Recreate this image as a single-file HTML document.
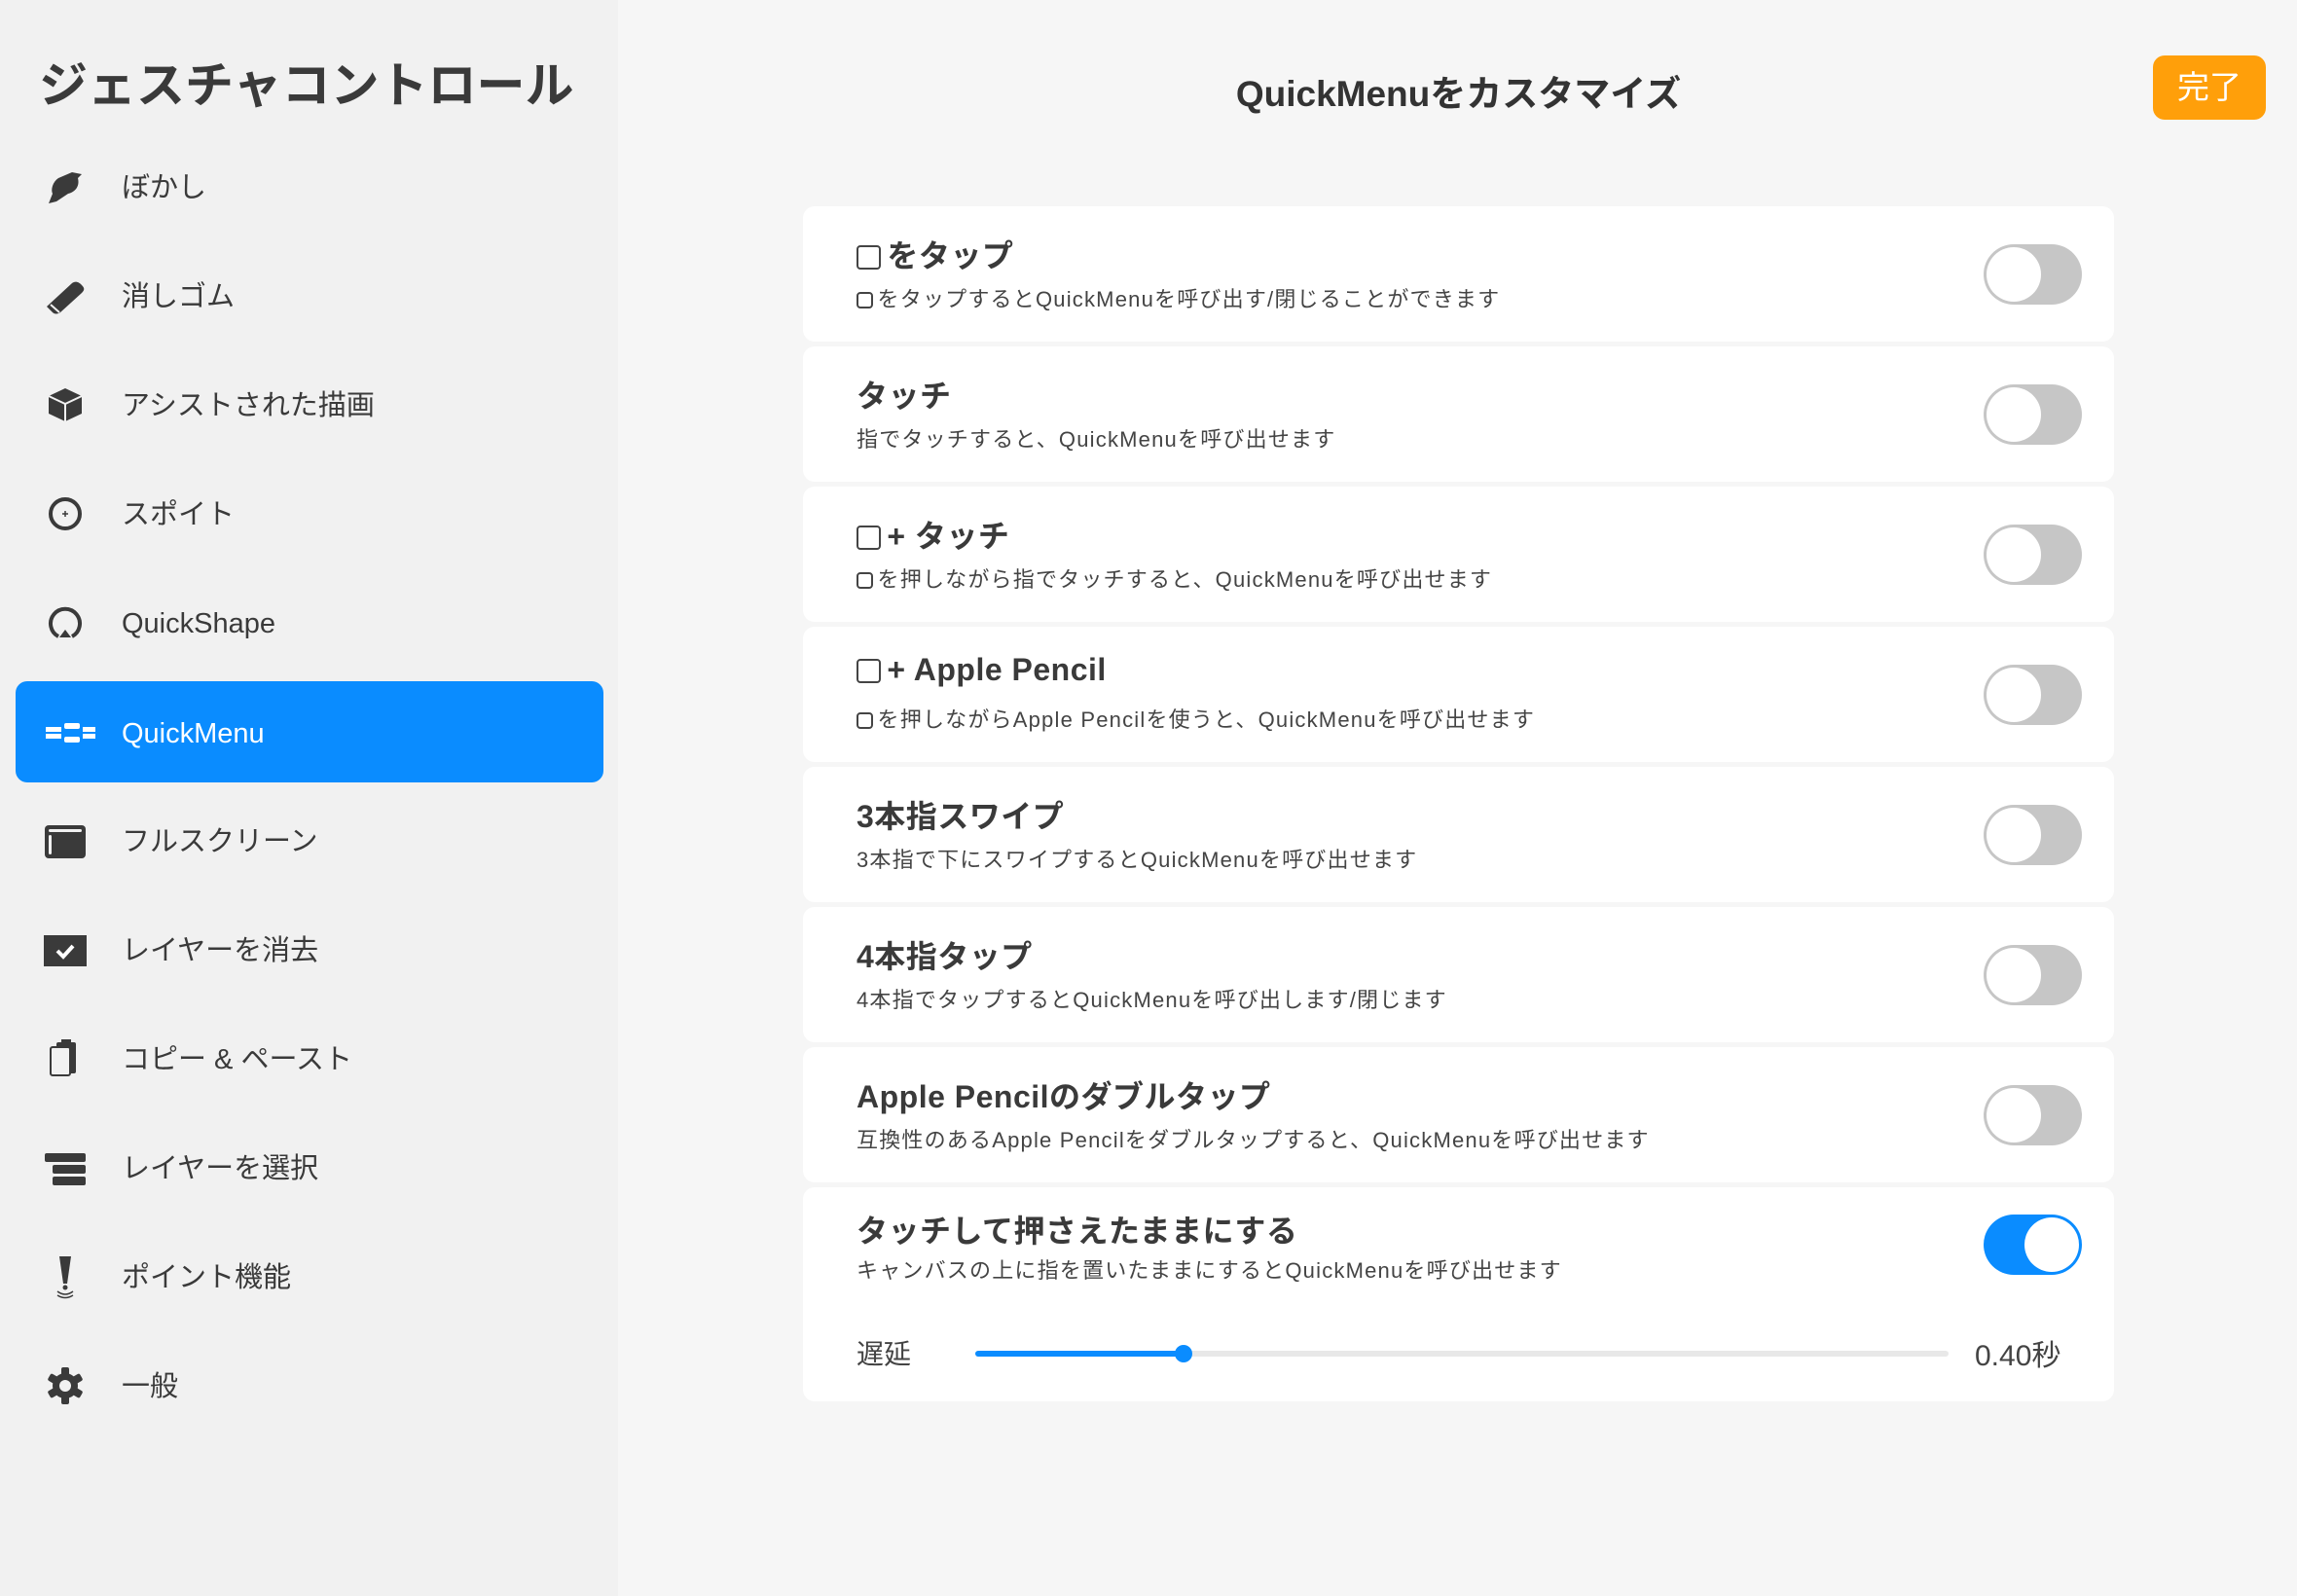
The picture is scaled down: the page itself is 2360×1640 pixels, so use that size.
<!DOCTYPE html>
<html><head><meta charset="utf-8"><style>
*{margin:0;padding:0;box-sizing:border-box}
body{width:2360px;height:1640px;background:#f6f6f6;font-family:"Liberation Sans","Noto Sans CJK JP",sans-serif;color:#3a3a3a;position:relative;overflow:hidden}
#side{position:absolute;left:0;top:0;width:635px;height:1640px;background:#f1f1f1}
h1{position:absolute;left:40px;top:48px;font-size:50px;font-weight:700;letter-spacing:0;color:#3a3a3a;white-space:nowrap}
.it{position:absolute;left:16px;width:604px;height:104px;border-radius:12px}
.it .ic{position:absolute;left:28px;top:30px;width:46px;height:46px}
.it .tx{position:absolute;left:109px;top:2px;line-height:104px;font-size:29px;color:#3a3a3a;letter-spacing:0}
.it.on{background:#0a8cff}.it.on .tx{color:#fff}
#hdr{position:absolute;left:825px;width:1347px;top:66px;text-align:center;font-size:37px;font-weight:700;color:#333}
#done{position:absolute;left:2212px;top:57px;width:116px;height:66px;border-radius:12px;background:#ff9f0a;color:#fff;font-size:33px;text-align:center;line-height:66px}
.card{position:absolute;left:825px;width:1347px;height:139px;background:#fff;border-radius:12px}
.t{position:absolute;left:55px;top:26px;font-size:32px;font-weight:700;color:#3a3a3a;white-space:nowrap;letter-spacing:0.5px}
.s{position:absolute;left:55px;top:78px;font-size:22px;color:#444;white-space:nowrap;letter-spacing:1.2px}
.sq{display:inline-block;width:.78em;height:.78em;border:2px solid #444;border-radius:4px;vertical-align:-0.08em;margin-right:.2em}
.tg{position:absolute;left:1213px;top:39px;width:101px;height:62px;border-radius:31px;background:#c6c6c6}
.tg::after{content:"";position:absolute;left:3px;top:3px;width:56px;height:56px;border-radius:50%;background:#fff}
.tg.on{background:#0a8cff}.tg.on::after{left:42px}
</style></head><body>
<div id="side">
<h1>ジェスチャコントロール</h1>
<div class="it" style="top:139px"><svg class="ic" viewBox="0 0 46 46"><path d="M6 40 L10 30 C8 26 10 18 16 14 L30 8 L40 10 L36 14 C38 22 34 28 26 30 L14 38 Z" fill="#3a3a3a"/></svg><div class="tx">ぼかし</div></div>
<div class="it" style="top:251px"><svg class="ic" viewBox="0 0 46 46"><path d="M4 34 L30 10 C33 8 36 8 40 12 C43 15 43 17 40 20 L18 40 C15 42 12 42 10 40 Z" fill="#3a3a3a"/><path d="M8 32 L17 40" stroke="#f1f1f1" stroke-width="2"/></svg><div class="tx">消しゴム</div></div>
<div class="it" style="top:363px"><svg class="ic" viewBox="0 0 46 46"><path d="M23 6 L40 14 L40 32 L23 40 L6 32 L6 14 Z" fill="#3a3a3a"/><path d="M6 14 L23 22 L40 14 M23 22 L23 40" stroke="#f1f1f1" stroke-width="2" fill="none"/></svg><div class="tx">アシストされた描画</div></div>
<div class="it" style="top:475px"><svg class="ic" viewBox="0 0 46 46"><circle cx="23" cy="23" r="15" stroke="#3a3a3a" stroke-width="4" fill="none"/><path d="M23 20v6M20 23h6" stroke="#3a3a3a" stroke-width="1.5"/></svg><div class="tx">スポイト</div></div>
<div class="it" style="top:587px"><svg class="ic" viewBox="0 0 46 46"><path d="M16 37 A15 15 0 1 1 30 37" stroke="#3a3a3a" stroke-width="4" fill="none"/><path d="M17 38 L23 30 L29 38 Z" fill="#3a3a3a"/></svg><div class="tx">QuickShape</div></div>
<div class="it on" style="top:700px"><svg class="ic" viewBox="0 0 46 46" style="left:22px;width:60px"><g fill="#fff"><rect x="2" y="17" width="16" height="5"/><rect x="2" y="24" width="16" height="5"/><rect x="21" y="13" width="16" height="6" rx="2"/><rect x="21" y="27" width="16" height="6" rx="2"/><rect x="40" y="17" width="18" height="5"/><rect x="40" y="24" width="18" height="5"/></g></svg><div class="tx">QuickMenu</div></div>
<div class="it" style="top:811px"><svg class="ic" viewBox="0 0 46 46"><rect x="2" y="7" width="42" height="34" rx="4" fill="#3a3a3a"/><rect x="6" y="11" width="34" height="3" rx="1.5" fill="#f1f1f1"/><rect x="6" y="17" width="3" height="20" rx="1.5" fill="#f1f1f1"/></svg><div class="tx">フルスクリーン</div></div>
<div class="it" style="top:923px"><svg class="ic" viewBox="0 0 46 46"><rect x="1" y="8" width="44" height="32" fill="#3a3a3a"/><path d="M15 24 L21 30 L31 19" stroke="#fff" stroke-width="4" fill="none"/></svg><div class="tx">レイヤーを消去</div></div>
<div class="it" style="top:1035px"><svg class="ic" viewBox="0 0 46 46"><rect x="14" y="6" width="20" height="32" rx="2" fill="#3a3a3a"/><rect x="19" y="3" width="10" height="5" fill="#3a3a3a"/><rect x="8" y="11" width="20" height="29" rx="2" fill="#f1f1f1" stroke="#3a3a3a" stroke-width="2"/></svg><div class="tx">コピー &amp; ペースト</div></div>
<div class="it" style="top:1147px"><svg class="ic" viewBox="0 0 46 46"><rect x="2" y="8" width="42" height="9" rx="2" fill="#3a3a3a"/><rect x="10" y="20" width="34" height="9" rx="2" fill="#3a3a3a"/><rect x="10" y="32" width="34" height="9" rx="2" fill="#3a3a3a"/></svg><div class="tx">レイヤーを選択</div></div>
<div class="it" style="top:1259px"><svg class="ic" viewBox="0 0 46 46"><path d="M17 2 L29 2 L25 30 L21 30 Z" fill="#3a3a3a"/><circle cx="23" cy="34" r="2.5" fill="#3a3a3a"/><path d="M15 38 Q23 44 31 38 M15 42 Q23 47 31 42" stroke="#3a3a3a" stroke-width="1.5" fill="none"/></svg><div class="tx">ポイント機能</div></div>
<div class="it" style="top:1371px"><svg class="ic" viewBox="0 0 46 46"><g fill="#3a3a3a"><circle cx="23" cy="23" r="13"/><rect x="19" y="4" width="8" height="38" rx="2"/><rect x="19" y="4" width="8" height="38" rx="2" transform="rotate(60 23 23)"/><rect x="19" y="4" width="8" height="38" rx="2" transform="rotate(120 23 23)"/></g><circle cx="23" cy="23" r="6" fill="#f1f1f1"/></svg><div class="tx">一般</div></div>
</div>
<div id="hdr">QuickMenuをカスタマイズ</div>
<div id="done">完了</div>

<div class="card" style="top:212px"><div class="t"><span class="sq"></span>をタップ</div><div class="s"><span class="sq"></span>をタップするとQuickMenuを呼び出す/閉じることができます</div><div class="tg"></div></div>
<div class="card" style="top:356px"><div class="t">タッチ</div><div class="s">指でタッチすると、QuickMenuを呼び出せます</div><div class="tg"></div></div>
<div class="card" style="top:500px"><div class="t"><span class="sq"></span>+ タッチ</div><div class="s"><span class="sq"></span>を押しながら指でタッチすると、QuickMenuを呼び出せます</div><div class="tg"></div></div>
<div class="card" style="top:644px"><div class="t"><span class="sq"></span>+ Apple Pencil</div><div class="s"><span class="sq"></span>を押しながらApple Pencilを使うと、QuickMenuを呼び出せます</div><div class="tg"></div></div>
<div class="card" style="top:788px"><div class="t">3本指スワイプ</div><div class="s">3本指で下にスワイプするとQuickMenuを呼び出せます</div><div class="tg"></div></div>
<div class="card" style="top:932px"><div class="t">4本指タップ</div><div class="s">4本指でタップするとQuickMenuを呼び出します/閉じます</div><div class="tg"></div></div>
<div class="card" style="top:1076px"><div class="t">Apple Pencilのダブルタップ</div><div class="s">互換性のあるApple Pencilをダブルタップすると、QuickMenuを呼び出せます</div><div class="tg"></div></div>
<div class="card" style="top:1220px;height:220px"><div class="t" style="top:20px">タッチして押さえたままにする</div><div class="s" style="top:68px">キャンバスの上に指を置いたままにするとQuickMenuを呼び出せます</div><div class="tg on" style="top:28px"></div>
<div style="position:absolute;left:55px;top:150px;font-size:28px;color:#444">遅延</div>
<div style="position:absolute;left:177px;top:168px;width:1000px;height:6px;background:#e8e8e8;border-radius:3px"></div>
<div style="position:absolute;left:177px;top:168px;width:214px;height:6px;background:#0a8cff;border-radius:3px"></div>
<div style="position:absolute;left:382px;top:162px;width:18px;height:18px;background:#0a8cff;border-radius:50%"></div>
<div style="position:absolute;left:1204px;top:148px;font-size:30px;color:#444">0.40秒</div>
</div>
</body></html>
